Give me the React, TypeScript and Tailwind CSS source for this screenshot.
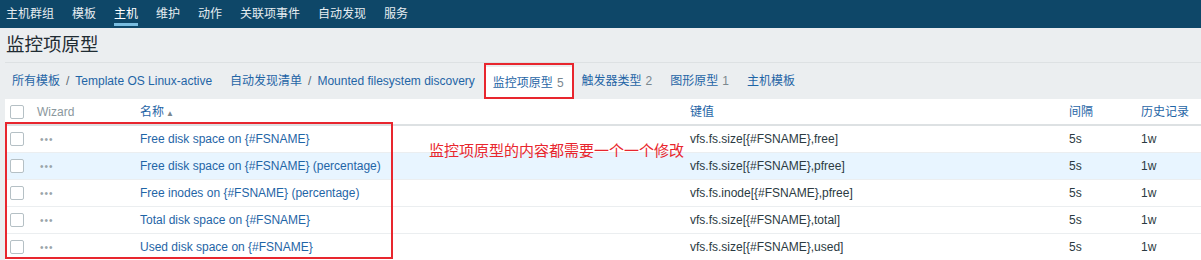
import React from "react";

const menu = ["主机群组", "模板", "主机", "维护", "动作", "关联项事件", "自动发现", "服务"];

const rows = [
  { name: "Free disk space on {#FSNAME}", key: "vfs.fs.size[{#FSNAME},free]" },
  { name: "Free disk space on {#FSNAME} (percentage)", key: "vfs.fs.size[{#FSNAME},pfree]" },
  { name: "Free inodes on {#FSNAME} (percentage)", key: "vfs.fs.inode[{#FSNAME},pfree]" },
  { name: "Total disk space on {#FSNAME}", key: "vfs.fs.size[{#FSNAME},total]" },
  { name: "Used disk space on {#FSNAME}", key: "vfs.fs.size[{#FSNAME},used]" },
];

const cols = "grid grid-cols-[27px_103px_550px_379px_72px_1fr]";

function Checkbox() {
  return <span className="block h-[14px] w-[14px] rounded-[2px] border border-[#b5c0c5] bg-white" />;
}

export default function App() {
  return (
    <div
      className="relative h-[260px] w-[1201px] overflow-hidden bg-[#ebeef0] text-[12px] text-[#1f2c33]"
      style={{ fontFamily: '"Liberation Sans", Arial, "Noto Sans CJK SC", sans-serif' }}
    >
      {/* top menu */}
      <div className="flex h-[28px] bg-[#0e4768]">
        <div className="-ml-[3px] flex">
          {menu.map((m) => (
            <div key={m} className="relative flex items-center px-[9px] text-[#e6edf1]">
              <span className={m === "主机" ? "text-white" : ""}>{m}</span>
              {m === "主机" && (
                <span className="absolute bottom-[2px] left-[9px] right-[9px] h-[3px] bg-[#79bde0]" />
              )}
            </div>
          ))}
        </div>
      </div>

      <div className="pl-[5px]">
        {/* title */}
        <div className="flex h-[35px] items-center border-b border-[#dde1e3] pl-[1px]">
          <h1 className="text-[18.5px] font-normal leading-none text-[#1f2c33]">监控项原型</h1>
        </div>

        {/* breadcrumb / tabs */}
        <div className="flex h-[36px] items-stretch text-[#1f65a6]">
          <div className="flex items-center pl-[7px] pr-[9px]">
            <span>所有模板</span>
            <span className="px-[6px] text-[#5c6a71]">/</span>
            <span>Template OS Linux-active</span>
          </div>
          <div className="flex items-center px-[9px]">
            <span>自动发现清单</span>
            <span className="px-[6px] text-[#5c6a71]">/</span>
            <span>Mounted filesystem discovery</span>
          </div>
          <div className="mt-[4px] flex items-center bg-white px-[9px]">
            <span>监控项原型</span>
            <span className="ml-[4px] text-[#7a878e]">5</span>
          </div>
          <div className="flex items-center px-[9px]">
            <span>触发器类型</span>
            <span className="ml-[4px] text-[#7a878e]">2</span>
          </div>
          <div className="flex items-center px-[9px]">
            <span>图形原型</span>
            <span className="ml-[4px] text-[#7a878e]">1</span>
          </div>
          <div className="flex items-center px-[9px]">
            <span>主机模板</span>
          </div>
        </div>

        {/* table */}
        <div className="bg-white">
          <div className={`${cols} h-[27px] items-center border-b-2 border-[#dde1e3]`}>
            <div className="pl-[5px]">
              <Checkbox />
            </div>
            <div className="pl-[5px] text-[#8b979d]">Wizard</div>
            <div className="pl-[5px] text-[#1f65a6]">
              名称<span className="ml-[2px] text-[8px] text-[#7a878e]">▲</span>
            </div>
            <div className="pl-[5px] text-[#1f65a6]">键值</div>
            <div className="pl-[5px] text-[#1f65a6]">间隔</div>
            <div className="pl-[5px] text-[#1f65a6]">历史记录</div>
          </div>
          {rows.map((r, i) => (
            <div
              key={r.key}
              className={`${cols} h-[27px] items-center border-b border-[#ebeef0] ${i === 1 ? "bg-[#e8f5ff]" : ""}`}
            >
              <div className="pl-[5px]">
                <Checkbox />
              </div>
              <div className="pl-[8px] text-[10px] tracking-[1px] text-[#9aa5aa]">•••</div>
              <div className="pl-[5px] text-[#1f65a6]">{r.name}</div>
              <div className="pl-[5px] text-[#2b3a42]">{r.key}</div>
              <div className="pl-[5px] text-[#2b3a42]">5s</div>
              <div className="pl-[5px] text-[#2b3a42]">1w</div>
            </div>
          ))}
        </div>
      </div>

      {/* annotations */}
      <div className="pointer-events-none absolute left-[484px] top-[63px] h-[36px] w-[90px] border-2 border-[#e8262e]" />
      <div className="pointer-events-none absolute left-[5px] top-[122px] h-[137px] w-[388px] border-2 border-[#e8262e]" />
      <div className="absolute left-[429px] top-[140px] text-[15px] text-[#e8262e]">监控项原型的内容都需要一个一个修改</div>
    </div>
  );
}
